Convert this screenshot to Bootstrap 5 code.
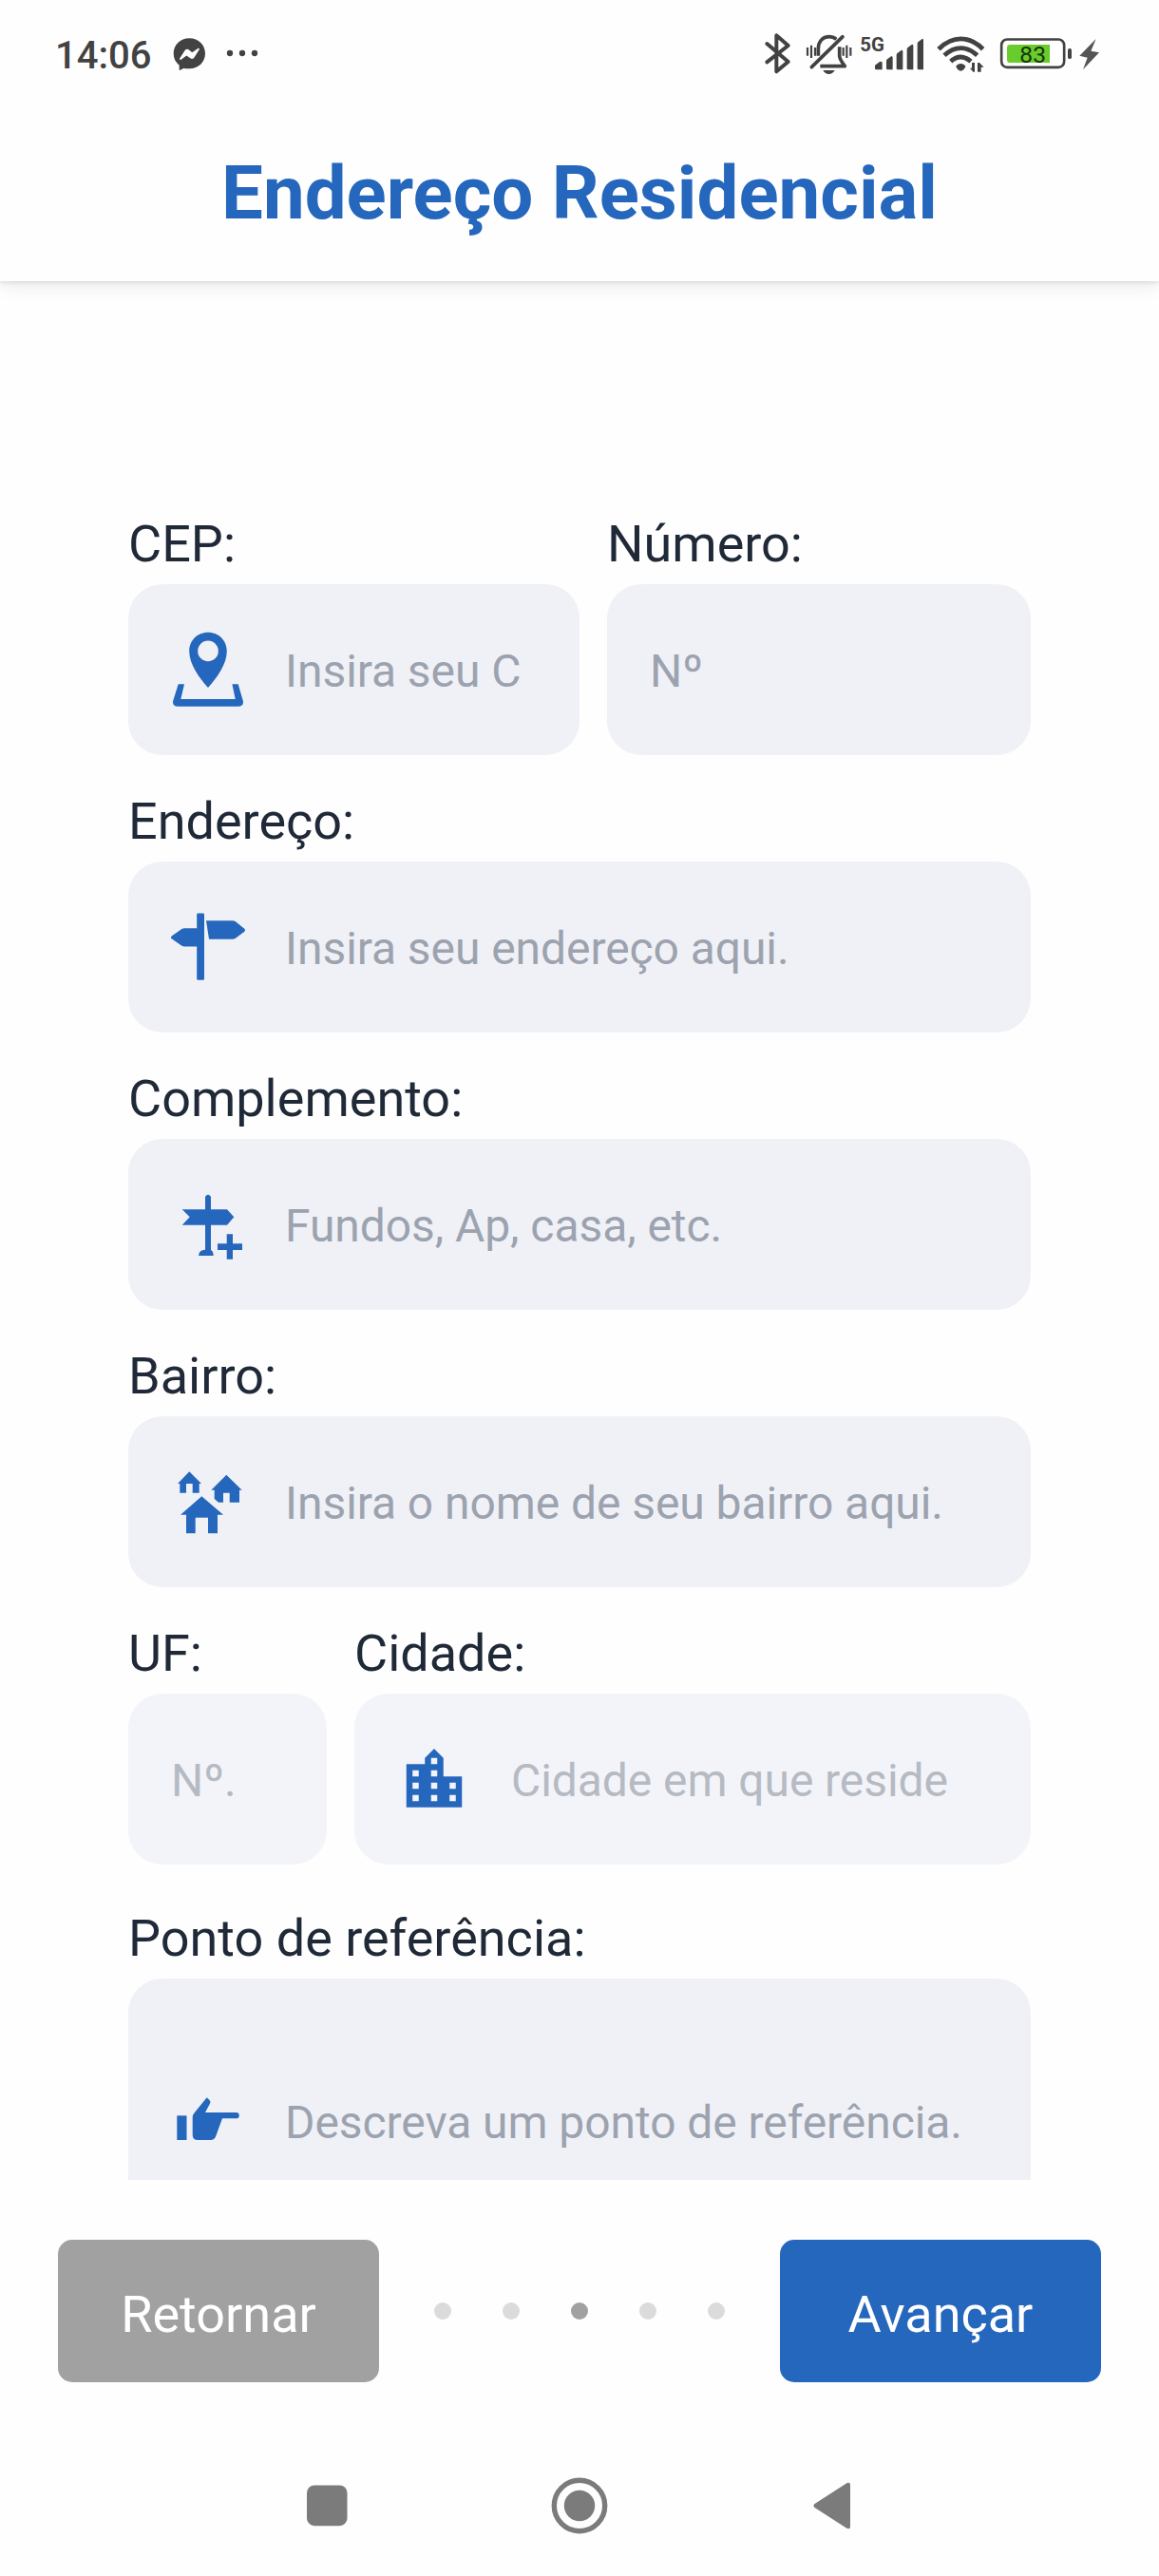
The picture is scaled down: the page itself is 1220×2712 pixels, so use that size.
<!DOCTYPE html>
<html lang="pt-BR">
<head>
<meta charset="utf-8">
<meta name="viewport" content="width=device-width, initial-scale=1">
<title>Endereço Residencial</title>
<link rel="stylesheet" href="https://cdn.jsdelivr.net/npm/bootstrap@5.3.0/dist/css/bootstrap.min.css">
<style>
  :root { --brand: #2567bd; --ink: #1f2937; --status: #424242; }
  body { width: 1220px; height: 2712px; background: #fefefe; font-family: Roboto, "Noto Sans", sans-serif; overflow: hidden; }
  svg { display: block; flex: none; }
  .app-head { height: 296px; background: #fefefe; box-shadow: 0 2px 4px rgba(0,0,0,.09), 0 5px 18px rgba(0,0,0,.08); }
  .status-row { height: 120px; color: var(--status); }
  .clock { font-size: 40px; font-weight: 500; line-height: 118px; width: 124px; padding-left: 58px; margin-right: 54px; white-space: nowrap; }
  .page-title { font-size: 78px; font-weight: 700; line-height: 92px; color: var(--brand); padding-top: 38px; }
  .form-area { height: 1999px; padding: 234px 135px 0; }
  .field-label { font-size: 54px; line-height: 85px; color: var(--ink); white-space: nowrap; }
  .field-box { height: 180px; border-radius: 36px; background: #f0f1f7; color: var(--brand); overflow: hidden; }
  .field-box.tall { height: 300px; }
  .field-box.locked { background: #f3f4f9; }
  .field-box .form-control { font-size: 48px; line-height: 60px; letter-spacing: -.07px; padding: 3px 0 0; border: 0; background: transparent; border-radius: 0; color: var(--ink); box-shadow: none; min-width: 0; }
  .form-control::placeholder { color: #9ca3af; opacity: 1; }
  .locked .form-control::placeholder { color: #b5bac3; }
  .no-icon { padding-left: 45px; }
  .row-gap { gap: 29px; margin-bottom: 27px; }
  .w-cep { width: 475px; } .w-num { width: 446px; } .w-uf { width: 209px; } .w-city { width: 712px; }
  .actions { height: 213px; padding: 63px 61px 0; }
  .btn-step { width: 338px; height: 150px; border: 0; border-radius: 15px; font-size: 54px; font-weight: 400; color: #fff; padding: 7px 0 0; }
  .btn-back { background: #a1a1a1; }
  .btn-next { background: var(--brand); }
  .dots { gap: 54px; height: 150px; }
  .step-dot { width: 18px; height: 18px; border-radius: 50%; background: #dbdbdb; }
  .step-dot.on { background: #a1a1a1; }
  .sys-nav { height: 204px; padding: 100px 323px 0; }
</style>
<script src="https://cdn.jsdelivr.net/npm/bootstrap@5.3.0/dist/js/bootstrap.bundle.min.js"></script>
</head>
<body class="d-flex flex-column">
<header class="app-head position-relative z-1 flex-shrink-0">
  <div class="status-row d-flex">
    <div class="clock">14:06</div>
    <!-- messenger and overflow dots -->
    <svg width="100" height="120" viewBox="534 0 300 360" fill="#424242">
      <path d="M598 121c-29 0-50 21-50 48 0 15 6 28 18 37v14c0 2 2 2 3 1l12-6c5 2 11 2 17 2 29 0 50-21 50-48s-21-48-50-48z"/>
      <path fill="#fefefe" d="M568 184l16-25c3-4 8-5 12-2l9 7c1 1 3 1 4 0l16-11c3-2 6 1 4 4l-15 24c-3 5-9 6-13 3l-10-7c-1-1-3-1-4 0l-15 11c-3 2-6-1-4-4z"/>
      <circle cx="726" cy="168" r="9.5"/><circle cx="765" cy="168" r="9.5"/><circle cx="804" cy="168" r="9.5"/>
    </svg>
    <div class="d-flex ms-auto">
      <!-- bluetooth -->
      <svg width="40" height="120" viewBox="60 0 120 360" fill="none" stroke="#424242" stroke-width="12" stroke-linejoin="round" stroke-linecap="round"><path d="M82 138l67 57-37 31V112l37 32-67 52"/></svg>
      <!-- muted bell -->
      <svg width="63" height="120" viewBox="180 0 189 360" fill="none" stroke="#424242" stroke-width="10">
        <path d="M244 176v-22c0-23 14-38 34-38 10 0 17 3 23 8M311 148v28c0 9 5 17 17 33H250" stroke-width="11" stroke-linejoin="round"/>
        <path d="M223 212l98-96" stroke-width="11" stroke-linecap="round"/>
        <path d="M210 150v26M222 143v40M234 150v26M323 150v26M334 143v40M346 150v26" stroke-width="6.5"/>
        <path d="M259 222h37c-3 7-10 12-18.500 12s-15.500-5-18.500-12z" fill="#424242" stroke="none"/>
      </svg>
      <!-- mobile signal -->
      <svg width="79" height="120" viewBox="369 0 237 360" fill="#424242">
        <text x="376" y="162" font-size="62" font-weight="700" textLength="77" lengthAdjust="spacingAndGlyphs">5G</text>
        <path d="M423 206l15-11q8-3 8 4v21h-19q-4 0-4-4zM459 192q0-3 3-5l12-9q5-2 5 4v38h-16q-4 0-4-4zM491 174q0-4 3-6l12-9q5-2 5 4v57h-16q-4 0-4-4zM524 156q0-4 3-6l12-9q5-2 5 4v75h-16q-4 0-4-4zM557 138q0-4 3-6l12-9q4-2 4 4v93h-15q-4 0-4-4z"/>
      </svg>
      <!-- wifi -->
      <svg width="66" height="120" viewBox="606 0 198 360" fill="none" stroke="#424242" stroke-width="14.500">
        <path d="M624 155c44-43 96-43 140 0M642 175c33-31 71-31 104 0M662 194c21-18 43-18 64 0"/>
        <path d="M694 201c7 0 11 3 15 8-1 6-9 15-15 15s-14-9-15-15c4-5 8-8 15-8z" fill="#424242" stroke="none"/>
        <path d="M733 227l-10-12h6v-17h9v29zM747 227v-29h6l14 14h-9v15z" fill="#424242" stroke="none"/>
      </svg>
      <!-- battery -->
      <svg width="172" height="120" viewBox="804 0 516 360" fill="#424242">
        <rect x="822.500" y="124.500" width="198" height="88" rx="18" fill="none" stroke="#424242" stroke-width="8"/>
        <path fill="#68cc2c" d="M850 141h125v57H850q-10 0-10-10v-37q0-10 10-10z"/>
        <text x="880" y="199" font-size="73" font-weight="400" fill="#17330a" textLength="83" lengthAdjust="spacingAndGlyphs">83</text>
        <rect x="1032" y="153" width="12" height="33" rx="5"/>
        <path fill="#555" d="M1121 123l-52 53 25 6-14 38 51-54-26-5z"/>
      </svg>
    </div>
  </div>
  <h1 class="page-title text-center mb-0">Endereço Residencial</h1>
</header>

<main class="form-area overflow-hidden flex-shrink-0">
  <div class="d-flex row-gap">
    <div class="w-cep">
      <label class="field-label d-block" for="cep">CEP:</label>
      <div class="field-box d-flex">
        <svg width="165" height="180" viewBox="0 0 165 180" fill="currentColor">
          <path fill-rule="evenodd" d="M84 50.700c-11.500 0-19.800 8.800-19.800 19.800 0 14 10.500 28 19.800 38.500 9.300-10.500 19.800-24.500 19.800-38.500 0-11-8.300-19.800-19.800-19.800zm0 8.900a10.800 10.800 0 1 1 0 21.600 10.800 10.800 0 0 1 0-21.600z"/>
          <path d="M52.700 105.300H59L55.300 121h57.400l-3.300-15.700h6.300l5.100 17.500q1.200 5.900-5 5.900H52.200q-6.200 0-5-5.900z"/>
        </svg>
        <input id="cep" class="form-control" placeholder="Insira seu C">
      </div>
    </div>
    <div class="w-num">
      <label class="field-label d-block" for="num">Número:</label>
      <div class="field-box d-flex no-icon"><input id="num" class="form-control" placeholder="Nº"></div>
    </div>
  </div>

  <div class="d-flex row-gap">
    <div class="w-100">
      <label class="field-label d-block" for="end">Endereço:</label>
      <div class="field-box d-flex">
        <svg width="165" height="180" viewBox="0 0 165 180" fill="currentColor">
          <rect x="72.200" y="54.500" width="7.800" height="70.300" rx="1.200"/>
          <path d="M45 80q0-1 1-1.700l10-7q1.500-1 3.500-1H73v19.300H59.500q-2 0-3.500-1l-10-7Q45 81 45 80zM82 62.300h27.500q2 0 3.500 1l9 7.300q1 .7 1 1.700t-1 1.700l-9 6.700q-1.500 1-3.500 1H85z"/>
        </svg>
        <input id="end" class="form-control" placeholder="Insira seu endereço aqui.">
      </div>
    </div>
  </div>

  <div class="d-flex row-gap">
    <div class="w-100">
      <label class="field-label d-block" for="comp">Complemento:</label>
      <div class="field-box d-flex">
        <svg width="165" height="180" viewBox="0 0 165 180" fill="currentColor">
          <path d="M81 74.300V61.500q0-1 1-1.700 2-2.200 4 0 1 .7 1 1.700v12.800h17l7.300 8-7.300 8.400H87v26q2.700 2 2.700 6.300H74q.5-6.300 7-6.300v-26H56.700l8-8.400-8-8z"/>
          <path d="M103.700 100.300h6.300v10h10v6.700h-10v9.700h-6.300V117H94v-6.700h9.700z"/>
        </svg>
        <input id="comp" class="form-control" placeholder="Fundos, Ap, casa, etc.">
      </div>
    </div>
  </div>

  <div class="d-flex row-gap">
    <div class="w-100">
      <label class="field-label d-block" for="bairro">Bairro:</label>
      <div class="field-box d-flex">
        <svg width="165" height="180" viewBox="0 0 165 180" fill="currentColor">
          <path d="M64.300 58.300L77 70.900h-2.300v9.800h-7V71H61v9.700h-6.700v-9.800H52z"/>
          <path d="M103.300 61.700l16.400 16H117v13h-10.300v-10H100v10h-5L90.700 87v-9.300h-3.400z"/>
          <path d="M77.300 84.300l22.700 19.500h-6v19.500H84v-16.600H70.700v16.600H61v-19.500h-6z"/>
        </svg>
        <input id="bairro" class="form-control" placeholder="Insira o nome de seu bairro aqui.">
      </div>
    </div>
  </div>

  <div class="d-flex row-gap mb-0">
    <div class="w-uf">
      <label class="field-label d-block" for="uf">UF:</label>
      <div class="field-box locked d-flex no-icon"><input id="uf" class="form-control" placeholder="Nº."></div>
    </div>
    <div class="w-city">
      <label class="field-label d-block" for="cidade">Cidade:</label>
      <div class="field-box locked d-flex">
        <svg width="165" height="180" viewBox="0 0 165 180" fill="currentColor">
          <g transform="translate(45 51.500) scale(3.25)"><path d="M19 15h-2v-2h2v2zm0 4h-2v-2h2v2zM13 7h-2V5h2v2zm0 4h-2V9h2v2zm0 4h-2v-2h2v2zm0 4h-2v-2h2v2zM7 11H5V9h2v2zm0 4H5v-2h2v2zm0 4H5v-2h2v2zm8-8V5l-3-3-3 3v2H3v14h18V11h-6z"/></g>
        </svg>
        <input id="cidade" class="form-control" placeholder="Cidade em que reside">
      </div>
    </div>
  </div>

  <div style="padding-top:35px">
    <label class="field-label d-block" for="ref">Ponto de referência:</label>
    <div class="field-box tall d-flex">
      <svg width="165" height="300" viewBox="0 0 165 300" fill="currentColor">
        <rect x="51.300" y="144.300" width="10.200" height="25.700"/>
        <path d="M67.700 146q0-2.500 1.800-4.600l13.200-16.100 2.500 2.300q2 2 .6 4.400L81 141h32.600a3.100 3.100 0 0 1 0 6.300H99l-6.700 18.400q-1.700 4.300-5.500 4.300H73.200q-5.500 0-5.500-5.500z"/>
      </svg>
      <input id="ref" class="form-control" placeholder="Descreva um ponto de referência.">
    </div>
  </div>
</main>

<div class="actions d-flex justify-content-between flex-shrink-0">
  <button type="button" class="btn btn-step btn-back">Retornar</button>
  <div class="dots d-flex align-items-center">
    <span class="step-dot"></span><span class="step-dot"></span><span class="step-dot on"></span><span class="step-dot"></span><span class="step-dot"></span>
  </div>
  <button type="button" class="btn btn-step btn-next">Avançar</button>
</div>

<nav class="sys-nav d-flex justify-content-between flex-shrink-0">
  <svg width="43" height="60" viewBox="0 0 43 60" fill="#7b7b7b"><rect x="0" y="8.500" width="42.500" height="42.700" rx="8"/></svg>
  <svg width="60" height="60" viewBox="0 0 60 60" fill="#7b7b7b"><circle cx="30" cy="30" r="26.700" fill="none" stroke="#7b7b7b" stroke-width="5.400"/><circle cx="30" cy="30" r="16.200"/></svg>
  <svg width="43" height="60" viewBox="0 0 43 60" fill="#7b7b7b"><path d="M3.200 28.300Q1.500 30 3.200 31.700L37.300 53.700Q41 55.200 41 52V8Q41 4.800 37.300 6.300z"/></svg>
</nav>
</body>
</html>
